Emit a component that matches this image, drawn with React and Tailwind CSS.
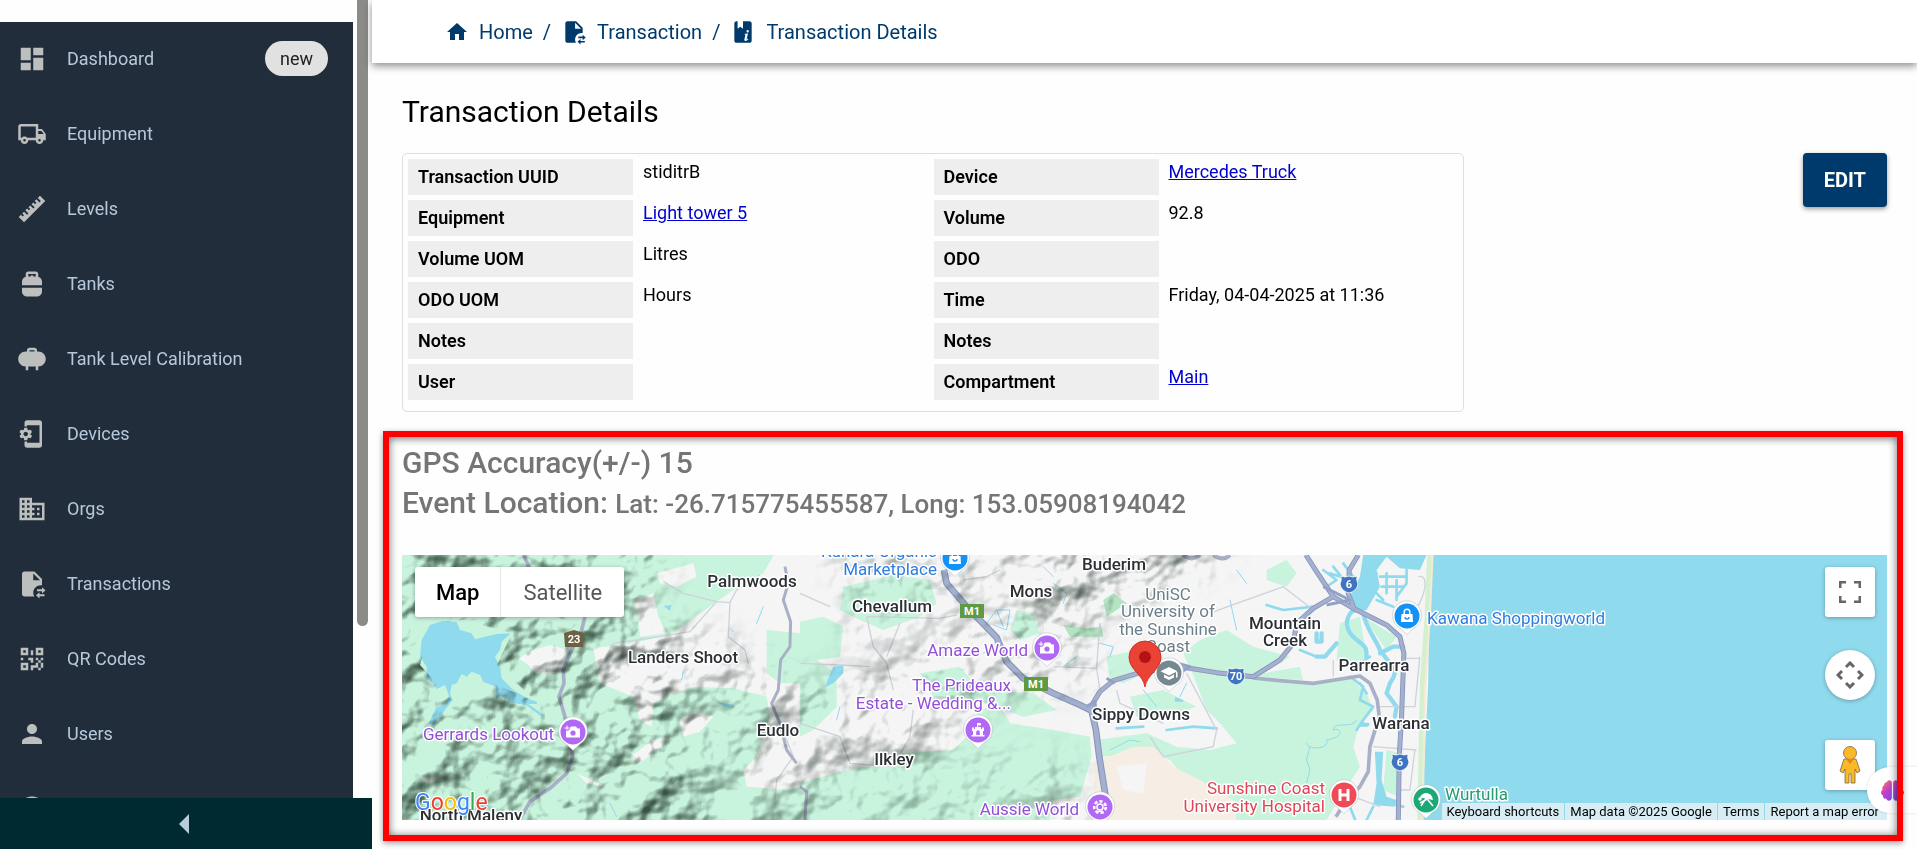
import React from 'react';
import {
  MdDashboard,
  MdOutlineLocalShipping,
  MdPropaneTank,
  MdPropane,
  MdPhonelinkSetup,
  MdDomain,
  MdPerson,
  MdAccountCircle,
  MdHome,
} from 'react-icons/md';
import { FaBrain } from 'react-icons/fa';

function PathIcon({ d, className }) {
  return (
    <svg viewBox="0 0 24 24" fill="currentColor" fillRule="evenodd" className={className} aria-hidden="true">
      <path d={d} />
    </svg>
  );
}

const RULER =
  'M1.39,18.36L3.16,16.6L4.58,18L5.64,16.95L4.22,15.54L5.64,14.12L8.11,16.6L9.17,15.54L6.7,13.06L8.11,11.65L9.53,13.06L10.59,12L9.17,10.59L10.59,9.17L13.06,11.65L14.12,10.59L11.65,8.11L13.06,6.7L14.47,8.11L15.54,7.05L14.12,5.64L15.54,4.22L18,6.7L19.07,5.64L16.6,3.16L18.36,1.39L22.61,5.64L5.64,22.61L1.39,18.36Z';
const QRCODE =
  'M3,11H5V13H3V11M11,5H13V9H11V5M9,11H13V15H11V13H9V11M15,11H17V13H19V11H21V13H19V15H21V19H19V21H17V19H13V21H11V17H15V15H17V13H15V11M19,19V15H17V19H19M15,3H21V9H15V3M17,5V7H19V5H17M3,3H9V9H3V3M5,5V7H7V5H5M3,15H9V21H3V15M5,17V19H7V17H5Z';
const FILE_SWAP =
  'M14,2H6C4.89,2 4,2.89 4,4V20C4,21.11 4.89,22 6,22H13.8C13.3,21.1 13,20.1 13,19C13,15.7 15.7,13 19,13C19.3,13 19.7,13 20,13.1V8L14,2M13,9V3.5L18.5,9H13M20,14.5V16.2H16V17.8H20V19.5L22.8,17L20,14.5M18,18.5L15.2,21L18,23.5V21.8H22V20.2H18V18.5Z';
const BOOK_INFO =
  'M6,2H7V9L9.5,7.2L12,9V2H18C19.1,2 20,2.9 20,4V20C20,21.1 19.1,22 18,22H6C4.9,22 4,21.1 4,20V4C4,2.9 4.9,2 6,2M16.3,10.2A1.1,1.1 0 1,0 16.3,12.4A1.1,1.1 0 1,0 16.3,10.2M13.6,13.6L13.4,14.4H14.3L13.3,18.6C13,20 14,20.4 15,20.1C15.9,19.8 16.5,19.2 17,18.4L16.4,18C15.9,18.7 15.2,19.2 15.3,18.6L16.6,13.3L13.6,13.6Z';

const RulerIcon = ({ className }) => <PathIcon d={RULER} className={className} />;
const QrIcon = ({ className }) => <PathIcon d={QRCODE} className={className} />;
const FileSwapIcon = ({ className }) => <PathIcon d={FILE_SWAP} className={className} />;
const BookIcon = ({ className }) => <PathIcon d={BOOK_INFO} className={className} />;

const NAV = [
  { label: 'Dashboard', icon: MdDashboard, badge: 'new' },
  { label: 'Equipment', icon: MdOutlineLocalShipping },
  { label: 'Levels', icon: RulerIcon },
  { label: 'Tanks', icon: MdPropaneTank },
  { label: 'Tank Level Calibration', icon: MdPropane },
  { label: 'Devices', icon: MdPhonelinkSetup },
  { label: 'Orgs', icon: MdDomain },
  { label: 'Transactions', icon: FileSwapIcon },
  { label: 'QR Codes', icon: QrIcon },
  { label: 'Users', icon: MdPerson },
  { label: '', icon: MdAccountCircle },
];

function Sidebar() {
  return (
    <aside className="flex w-[372px] shrink-0 flex-col">
      <div className="flex min-h-0 flex-1 gap-1 overflow-hidden">
        <nav className="mt-[22px] w-[353px] overflow-hidden bg-[#212d3b]">
          {NAV.map(({ label, icon: Icon, badge }) => (
            <a key={label} href="#" aria-label={label || 'Account'} className="flex h-[75px] items-center pb-0.5 pl-[17px] pr-[25px] text-[18px] text-[#b7c8da]">
              <Icon className="size-[30px] text-[#bdbfbe]" />
              <span className="ml-5 flex-1">{label}</span>
              {badge && (
                <span className="flex h-[35px] items-center rounded-full bg-[#e1e1e1] px-[15px] text-[#222]">{badge}</span>
              )}
            </a>
          ))}
        </nav>
        <div className="h-[626px] w-[11px] rounded-b-full bg-[#8b8b89]" />
      </div>
      <button type="button" aria-label="Collapse sidebar" className="flex h-[51px] items-center justify-center bg-[#002a31] pr-1">
        <svg viewBox="0 0 10 20" className="h-5 w-[10px]" fill="#b9cde0">
          <path d="M10 0V20L0 10Z" />
        </svg>
      </button>
    </aside>
  );
}

function Breadcrumbs() {
  return (
    <header className="z-10 flex h-[63px] shrink-0 items-center bg-white pl-[73px] text-[20px] text-[#003a6c] shadow-[0_3px_8px_rgba(0,0,0,0.45)]">
      <a href="#" className="flex items-center gap-[10px]">
        <MdHome className="size-6" />
        Home
      </a>
      <span className="mx-[10px]">/</span>
      <a href="#" className="flex items-center gap-[10px]">
        <FileSwapIcon className="size-[26px]" />
        Transaction
      </a>
      <span className="mx-[10px]">/</span>
      <a href="#" className="flex items-center gap-[10px]">
        <BookIcon className="size-[26px]" />
        Transaction Details
      </a>
    </header>
  );
}

const ROWS = [
  [['Transaction UUID', 'stiditrB'], ['Device', 'Mercedes Truck', true]],
  [['Equipment', 'Light tower 5', true], ['Volume', '92.8']],
  [['Volume UOM', 'Litres'], ['ODO', '']],
  [['ODO UOM', 'Hours'], ['Time', 'Friday, 04-04-2025 at 11:36']],
  [['Notes', ''], ['Notes', '']],
  [['User', ''], ['Compartment', 'Main', true]],
];

function DetailsTable() {
  return (
    <div className="max-w-[1062px] flex-1 rounded-[5px] border border-[#dedede] pr-1 pb-[6px]">
      <table className="w-full table-fixed border-separate border-spacing-[5px] text-[18px] leading-[26px] text-black">
        <tbody>
          {ROWS.map((row, i) => (
            <tr key={i}>
              {row.map(([label, value, link], col) => (
                <React.Fragment key={col}>
                  <th scope="row" className="h-9 w-[225px] bg-[#eeeeee] px-[10px] text-left align-middle font-semibold">
                    {label}
                  </th>
                  <td className="px-[5px] align-top">
                    {link ? <a href="#" className="text-[#0000d0] underline">{value}</a> : value}
                  </td>
                </React.Fragment>
              ))}
            </tr>
          ))}
        </tbody>
      </table>
    </div>
  );
}

const PLACES = [
  ['Palmwoods', 350, 32],
  ['Landers Shoot', 281, 108],
  ['Eudlo', 376, 181],
  ['North Maleny', 69, 266],
  ['Chevallum', 490, 57],
  ['Mons', 629, 42],
  ['Buderim', 712, 15],
  ['Ilkley', 492, 210],
  ['Sippy Downs', 739, 165],
  ['Mountain', 883, 74],
  ['Creek', 883, 91],
  ['Parrearra', 972, 116],
  ['Warana', 999, 174],
];

const POIS = [
  ['Gerrards Lookout', 152, 185, 'end', '#9250d8'],
  ['Kunara Organic', 535, 2, 'end', '#2f7de0'],
  ['Marketplace', 535, 20, 'end', '#2f7de0'],
  ['Amaze World', 626, 101, 'end', '#9250d8'],
  ['The Prideaux', 609, 136, 'end', '#9250d8'],
  ['Estate - Wedding &...', 609, 154, 'end', '#9250d8'],
  ['Aussie World', 677, 260, 'end', '#9250d8'],
  ['UniSC', 766, 45, 'middle', '#6b7f8a'],
  ['University of', 766, 62, 'middle', '#6b7f8a'],
  ['the Sunshine', 766, 80, 'middle', '#6b7f8a'],
  ['Coast', 766, 97, 'middle', '#6b7f8a'],
  ['Kawana Shoppingworld', 1025, 69, 'start', '#2f7de0'],
  ['Sunshine Coast', 923, 239, 'end', '#e04556'],
  ['University Hospital', 923, 257, 'end', '#e04556'],
  ['Wurtulla', 1043, 245, 'start', '#289a72'],
];

const GLYPHS = {
  camera: (
    <g>
      <path fill="#fff" d="M-7-3.5H-3.5L-2-5.5H3L4.5-3.5H7V5.5H-7Z" />
      <circle cy="1" r="2.6" fill="#b168f5" />
      <path stroke="#b168f5" strokeWidth="3" d="M-6-7V-1M-9-4H-3" />
      <path stroke="#fff" strokeWidth="1" d="M-6-6.500V-1.500M-8.500-4H-3.500" />
    </g>
  ),
  castle: (
    <g fill="#fff">
      <path fillRule="evenodd" d="M-6-2.500H-4V-1H-3V-3H3V-1H4V-2.500H6V1H5V5H6.500V6.500H-6.500V5H-5V1H-6ZM-1.800 5V2A1.800 1.800 0 0 1 1.800 2V5Z" />
      <path d="M-1-7H3V-4.500H0V-3H-1Z" />
    </g>
  ),
  bag: (
    <g>
      <path fill="#fff" d="M-5.500-2H5.500L6 6H-6Z" />
      <path fill="none" stroke="#fff" strokeWidth="1.500" d="M-2.800-1V-4A2.800 2.800 0 0 1 2.800-4V-1" />
      <path fill="none" stroke="#1a8cf5" strokeWidth="1.300" d="M-2 1A2 2 0 0 0 2 1" />
    </g>
  ),
  flower: (
    <g fill="none" stroke="#fff" strokeWidth="1.500">
      <circle r="3" />
      <circle r="5.800" strokeWidth="2.600" strokeDasharray="3.200 2" />
      <path d="M-3.500 6.500C-2 3 2 3 3.500 6.500" />
    </g>
  ),
  school: (
    <g fill="#fff">
      <path d="M0-6L8.500-1.700L0 2.600L-8.500-1.700Z" />
      <path d="M-5 1.500L0 4L5 1.500V4.500L0 7L-5 4.500ZM7-1H8.500V4.500H7Z" />
    </g>
  ),
  hospital: <path fill="none" stroke="#fff" strokeWidth="3" d="M-4-6V6M4-6V6M-4 0H4" />,
  beach: (
    <g fill="none" stroke="#fff" strokeWidth="1.500">
      <path fill="#fff" d="M-5-3C-2-8 5-7 6-1Z" />
      <path d="M1-3L-5 6M2 0L7 6M5-3L-6 3" />
      <circle cx="-6" cy="-1" r="1" />
    </g>
  ),
};

const PINS = [
  [171, 177, '#b168f5', 'camera'],
  [645, 93, '#b168f5', 'camera'],
  [576, 175, '#b168f5', 'castle'],
  [553, 3, '#1292f7', 'bag'],
  [1005, 61, '#1292f7', 'bag'],
  [698, 252, '#b168f5', 'flower'],
  [767, 118, '#75878f', 'school'],
  [942, 240, '#f04a57', 'hospital'],
  [1024, 245, '#1fa877', 'beach'],
];

const SHIELDS = [
  [172, 84, '23', '#6d6145'],
  [570, 56, 'M1', '#5f9a42'],
  [634, 129, 'M1', '#5f9a42'],
  [834, 121, '70', '#3f74c0'],
  [947, 29, '6', '#3f74c0'],
  [998, 207, '6', '#3f74c0'],
];

function Shield({ x, y, text, color }) {
  let shape = <rect x="-12" y="-7" width="24" height="14" fill={color} />;
  if (text === '23') shape = <path d="M-10-6L0-9L10-6L9 8H-9Z" fill={color} />;
  if (color === '#3f74c0') shape = <path d="M-8-8Q-4-6 0-8Q4-6 8-8Q7-4 9 0Q8 7 0 9Q-8 7-9 0Q-7-4-8-8Z" fill={color} stroke="#fff" strokeWidth="0.800" />;
  return (
    <g transform={`translate(${x} ${y})`}>
      {shape}
      <text y="4" textAnchor="middle" fill="#fff" className="text-[11px] font-bold">{text}</text>
    </g>
  );
}

const MOTORWAY = 'M1632 60L1640 100L1700 170L1790 262L1820 335L1870 385L1960 430L2040 465L2075 482L2088 540L2098 620L2118 745';
const HIGHWAYS =
  'M2070 475L2100 425L2140 392L2230 365L2350 352L2450 368L2560 380L2640 330L2680 280L2690 220L2740 175L2800 140L2860 175L2960 225L3000 260L3012 310L3005 500L2998 620L2995 820M2718 15L2750 65L2800 140M2875 15L2848 60L2845 130L2862 175';

// Land, water and roads are drawn on a grid three times finer than the labels
function Terrain() {
  return (
    <g transform="translate(-2 -5) scale(0.3333)">
      <rect width="4500" height="850" fill="#f5f5f6" />
      <g fill="#c8f3dd">
        <path d="M0 0H1130L1090 70L1000 120L950 155L880 205L820 250L700 280L580 295L600 400L700 440L720 510L755 530L760 460L800 440L880 410L1000 415L1100 440L1110 500L1070 620L1030 660L1040 710L1160 720L1240 700V830H0Z" />
        <path d="M1100 240L1200 250L1230 340L1200 400L1140 400L1100 370Z" />
        <path d="M1330 110L1480 75L1590 90L1610 160L1560 200L1450 240L1380 210L1320 180Z" />
        <path d="M1200 215L1270 200L1330 230L1320 320L1250 330L1310 370L1310 470L1240 540L1200 560Z" />
        <path d="M1200 700L1300 670L1390 650L1480 650L1500 610L1660 600L1700 560L1720 500L1790 450L1830 520L1960 540L2070 560L2075 620L2040 740L1960 750L1950 810H1200Z" />
        <path d="M1560 370L1680 350L1740 420L1900 430L1970 480L1870 500L1760 460L1600 440Z" />
        <path d="M1850 180L1900 190L1920 250L1860 270L1830 240ZM2120 320L2260 290L2300 340L2170 400L2130 390ZM2190 440L2290 420L2390 470L2300 500L2210 500Z" />
        <path d="M2600 60L2660 30L2690 70L2660 110L2600 90ZM2350 310L2400 270L2480 240L2560 290L2670 320L2590 370L2700 350L2710 390L2560 380L2370 355Z" />
        <path d="M2370 350L2480 372L2560 382L2740 400L2850 385L2900 430L2920 480L2880 520L2860 590L2880 650L2810 760L2780 810H2500L2450 740L2360 690L2310 630L2250 610L2100 620L2090 570L2240 550L2330 590L2430 600L2510 580L2460 520L2420 480Z" />
        <path d="M2820 220L2880 200L2900 320L2850 360L2810 330ZM2960 600L3000 610L2995 740L2950 720ZM2890 200L2990 260L2960 300Z" />
        <path d="M2110 150L2140 130L2180 160L2120 200ZM1990 225L2060 235L2105 230L2110 260L2010 260Z" fill="#b5e4c5" />
      </g>
      <path d="M2080 640L2200 590L2260 590L2320 650L2400 690L2500 750L2510 810H2085Z" fill="#f6eee5" />
      <g fill="#f5f5f6">
        <path d="M355 325L400 300L450 285L505 300L480 370L410 372L385 345Z" />
        <path d="M700 150L760 130L775 200L800 250L720 260L715 200ZM560 100L620 80L640 190L580 180ZM770 70L880 40L890 80L830 110L780 100Z" />
        <path d="M840 510L880 485L940 500L900 545L850 560ZM690 620L760 570L820 560L770 600L720 640ZM60 680L150 685L80 700ZM530 670L620 710L560 700Z" />
        <path d="M2150 650L2240 640L2230 730L2170 720ZM2550 250L2640 240L2680 300L2600 300Z" />
      </g>
      <path d="M2360 560L2440 510L2450 590L2330 590L2280 560Z" fill="#f5f5f6" />

      <g fill="#90daee">
        <path d="M90 225L130 212L170 216L180 240L215 250L225 268L290 252L332 250L305 275L300 300L285 320L300 350L305 385L340 420L380 445L412 455L410 462L385 462L432 495L425 500L378 465L335 458L300 435L290 450L288 410L250 395L240 375L215 365L200 380L185 372L170 400L155 405L150 430L158 450L100 525L85 522L110 470L135 465L148 440L135 405L110 417L100 400L80 385L80 350L60 320L65 270Z" />
        <path d="M1300 350L1330 345L1330 370L1300 400L1275 412L1285 385ZM950 455L1005 465L1000 475L970 468ZM790 168L815 165L810 182ZM2325 440L2350 450L2350 455L2325 455ZM2880 515L2910 520L2905 530L2880 530Z" />
        <path d="M3090 15H4500V820H3065L3085 400Z" />
        <path d="M2890 15H3080L3060 60L3000 55L2960 20L2930 60L2940 110L2900 180L2860 190L2850 140L2880 80Z" />
        <path d="M2925 605L2950 605L2945 690L2960 740L2990 750L2985 770L2920 765L2930 700Z" />
      </g>
      <path d="M3090 15L3082 200L3068 400L3060 820" fill="none" stroke="#d4f0cf" strokeWidth="16" />
      <path d="M3098 15L3090 200L3075 420L3068 820" fill="none" stroke="#f4ecd2" strokeWidth="6" />

      <g fill="none" stroke="#90daee" strokeLinecap="round" strokeLinejoin="round">
        <g strokeWidth="13">
          <path d="M2860 180C2830 210 2840 240 2860 260C2890 290 2900 280 2900 320" />
          <path d="M2890 190C2900 240 2930 270 2940 300L2970 340C2990 360 2990 370 2970 400L2960 430L2990 470L2985 500" />
          <path d="M2940 310L2980 290H3010M2750 320H2775L2810 280M2750 250V275H2765V250" />
        </g>
        <g strokeWidth="8">
          <path d="M2790 70L2850 90M2800 50L2840 100M2830 40L2860 80M2770 60L2810 90L2780 110M2930 70L2920 120L2950 150M2940 80H3020M2945 110H3010M2960 70V130M2990 90V150M2930 150L2980 170M3020 60V100L2990 140" />
          <path d="M2850 380L2890 410L2880 450L2920 470L2890 510L2870 540M2880 400L2900 430M2820 350L2880 340L2910 320M2850 770L2870 820M2900 810L2920 770M2990 765L3010 770" />
          <path d="M2450 535L2380 530L2300 540M2230 530L2150 535M2600 165L2650 180L2740 170M2700 300L2750 320" />
        </g>
        <g strokeWidth="3">
          <path d="M2720 580C2720 600 2790 600 2780 570C2840 560 2820 530 2800 540C2800 510 2860 540 2870 510M2730 590L2720 630L2730 660L2720 700" />
          <path d="M1760 220L1790 180L1830 180L1820 240L1780 225M1790 180L1810 230M1780 290L1750 310M1960 100L2000 130L1990 160M1930 50L1960 80M2490 150L2510 240M2510 60L2540 100M2100 280L2140 290L2130 320M1990 350L2030 320M2230 420L2270 470M2360 400L2340 440" />
          <path d="M2130 600L2190 570L2220 575M1320 470L1310 510M845 390L850 365M1070 220L1090 170M630 760L650 800M990 235L1000 245" />
        </g>
      </g>

      <g fill="none" stroke="#cfd2dc" strokeWidth="4">
        <path d="M790 95L850 130L950 155L990 158L1010 120L1080 75M990 158L985 260L1035 300L1045 340M950 155L870 245L780 260L640 280" />
        <path d="M1200 340L1320 345L1410 350M1400 200L1420 290L1460 340L1480 420M1500 220L1460 320M1200 520L1320 560L1350 640L1480 650L1530 560L1540 480M1400 200L1620 205L1670 195M1200 130L1290 170" />
        <path d="M1690 90L1760 80L1800 60M1960 350L2090 355L2100 420M2100 220L2090 355M2150 420L2160 460L2290 520M2250 560L2290 620L2440 590L2450 540L2360 370M2370 360L2340 350M2400 200L2650 110L2740 180" />
        <path d="M3055 80C3100 70 3060 180 3040 180M3020 325H3060M3060 320L3045 470L2940 470M2920 590L3050 600M3045 600L3030 720H3000M2860 740L2940 770M2800 380V330" />
        <path d="M1130 520L1160 570L1180 620L1130 690L1125 750" />
      </g>

      <g fill="none" stroke="#a8b0c6" strokeLinejoin="round">
        <path d="M370 15L392 60M560 180L545 240L510 310L490 360L492 400L477 440L492 490L510 560L518 620L500 670L450 715L390 755L370 790" strokeWidth="11" />
        <path d="M1155 50L1165 100L1150 150L1172 215L1170 290L1142 330L1135 420L1115 460L1140 520L1160 600L1190 640M1200 710L1220 725L1215 810" strokeWidth="9" />
        <path d="M2560 384L2640 392L2740 400L2880 378L2910 400L2932 450L2938 500L2910 590L2905 665L2880 710L2840 750L2808 800" strokeWidth="11" />
        <path d="M2350 15Q2375 35 2400 15M2440 15Q2470 35 2490 15" strokeWidth="12" />
      </g>
      <g fill="none" strokeLinejoin="round">
        <path d={MOTORWAY} stroke="#8794b8" strokeWidth="20" />
        <path d={HIGHWAYS} stroke="#8794b8" strokeWidth="15" />
        <path d={MOTORWAY} stroke="#a3b0d0" strokeWidth="14" />
        <path d={HIGHWAYS} stroke="#a3b0d0" strokeWidth="10" />
        <path d="M2770 110L2850 150L2780 165M2060 470L2085 455L2090 500M2335 340L2370 350L2345 365M2120 385L2145 400" stroke="#94a1c6" strokeWidth="9" />
      </g>
    </g>
  );
}

function Relief() {
  return (
    <g className="mix-blend-multiply">
      <defs>
        <filter id="relief" x="0" y="0" width="100%" height="100%" colorInterpolationFilters="sRGB">
          <feTurbulence type="fractalNoise" baseFrequency="0.018 0.02" numOctaves="4" seed="11" />
          <feColorMatrix values="0 0 0 0 0  0 0 0 0 0  0 0 0 0 0  1 0 0 0 0" />
          <feGaussianBlur stdDeviation="0.800" />
          <feDiffuseLighting surfaceScale="20" diffuseConstant="1.250" lightingColor="#fff">
            <feDistantLight azimuth="225" elevation="53" />
          </feDiffuseLighting>
          <feComponentTransfer>
            <feFuncR type="linear" slope="0.720" intercept="0.280" />
            <feFuncG type="linear" slope="0.660" intercept="0.340" />
            <feFuncB type="linear" slope="0.700" intercept="0.300" />
          </feComponentTransfer>
        </filter>
        <filter id="soften" x="-20%" y="-20%" width="140%" height="140%">
          <feGaussianBlur stdDeviation="16" />
        </filter>
        <mask id="hills">
          <rect width="1485" height="265" fill="#000" />
          <g filter="url(#soften)">
            <path fill="#fff" d="M-60-60H290L240 60L330 100L400 160V330H-60Z" />
            <path fill="#999" d="M270 60L420 130L560 70L680 40L700 120L560 160L480 280H300Z" />
            <path fill="#ddd" d="M640-40H840L800 20L700 60L620 90Z" />
            <path fill="#777" d="M420-40H640L620 40L450 90ZM440 200H680V300H440Z" />
          </g>
          <path d="M28 70L60 65L110 78L95 110L135 147L95 130L50 145L18 110Z" fill="#000" />
        </mask>
      </defs>
      <g mask="url(#hills)">
        <rect x="-20" y="-20" width="880" height="305" filter="url(#relief)" />
      </g>
    </g>
  );
}

function MapCanvas() {
  return (
    <svg viewBox="0 0 1485 265" preserveAspectRatio="xMidYMid slice" className="absolute inset-0 size-full" role="img" aria-label="Event location map">
      <Terrain />
      <Relief />
      {SHIELDS.map(([x, y, text, color]) => (
        <Shield key={`${x}-${y}`} x={x} y={y} text={text} color={color} />
      ))}
      <g className="text-[17px]" stroke="#fff" strokeWidth="3" strokeLinejoin="round" style={{ paintOrder: 'stroke' }}>
        {POIS.map(([text, x, y, anchor, color]) => (
          <text key={text} x={x} y={y} textAnchor={anchor} fill={color}>{text}</text>
        ))}
        {PLACES.map(([text, x, y]) => (
          <text key={text} x={x} y={y} textAnchor="middle" fill="#2c2f33" className="font-medium">{text}</text>
        ))}
      </g>
      {PINS.map(([x, y, color, glyph]) => (
        <g key={`${x}-${y}`} transform={`translate(${x} ${y})`}>
          <path d="M0 18.500L-7 12A14.500 14.500 0 1 1 7 12Z" fill="#fff" stroke="#9aa" strokeOpacity="0.400" />
          <circle r="12.500" fill={color} />
          {GLYPHS[glyph]}
        </g>
      ))}
      <path d="M743 132C741 119 727 115 727 102A16 16 0 0 1 759 102C759 115 745 119 743 132Z" fill="#ea4335" stroke="#c5221f" strokeWidth="0.800" />
      <circle cx="743" cy="102" r="6" fill="#b31412" />
      <text x="13" y="255" className="text-[23px]" stroke="#fff" strokeWidth="2" style={{ paintOrder: 'stroke' }}>
        <tspan fill="#4285f4">G</tspan>
        <tspan fill="#ea4335">o</tspan>
        <tspan fill="#fbbc04">o</tspan>
        <tspan fill="#4285f4">g</tspan>
        <tspan fill="#34a853">l</tspan>
        <tspan fill="#ea4335">e</tspan>
      </text>
    </svg>
  );
}

function MapControls() {
  const control = 'flex size-[50px] items-center justify-center bg-white shadow-[0_1px_4px_rgba(0,0,0,0.3)]';
  return (
    <>
      <div className="absolute left-[13px] top-3 flex h-[50px] rounded-[3px] bg-white text-[22px] shadow-[0_1px_4px_rgba(0,0,0,0.3)]">
        <button type="button" className="border-r border-[#e6e6e6] px-[21px] font-medium text-black">Map</button>
        <button type="button" className="px-[22px] text-[#565656]">Satellite</button>
      </div>
      <div className="absolute right-3 top-3 flex flex-col items-center">
        <button type="button" aria-label="Toggle fullscreen view" className={`${control} rounded-[3px]`}>
          <svg viewBox="0 0 22 22" className="size-[22px]" fill="none" stroke="#666" strokeWidth="2.500">
            <path d="M1.250 7V1.250H7M15 1.250H20.750V7M20.750 15V20.750H15M7 20.750H1.250V15" />
          </svg>
        </button>
        <button type="button" aria-label="Map camera controls" className={`${control} mt-[33px] rounded-full`}>
          <svg viewBox="0 0 28 28" className="size-7" fill="none" stroke="#666" strokeWidth="3">
            <path d="M10 6L14 2L18 6M10 22L14 26L18 22M6 10L2 14L6 18M22 10L26 14L22 18" />
          </svg>
        </button>
        <button type="button" aria-label="Drag Pegman onto the map" className={`${control} mt-10 rounded-[3px]`}>
          <svg viewBox="0 0 22 40" className="h-10 w-[22px]" stroke="#7a6a45" strokeWidth="0.800" fill="#fbb828">
            <path d="M5 14H17L21 26L18 28L16 24V38H12V29H10V38H6V24L4 28L1 26Z" />
            <circle cx="11" cy="8" r="6.500" />
            <path d="M7 14L11 19L15 14Z" fill="#e58a17" stroke="none" />
          </svg>
        </button>
      </div>
      <div className="absolute bottom-0 right-0 flex h-[17px] gap-px text-[13px] leading-[17px] text-black">
        <button type="button" className="bg-[#f5f5f5]/70 px-[5px]">Keyboard shortcuts</button>
        <span className="bg-[#f5f5f5]/70 px-[5px]">Map data ©2025 Google</span>
        <a href="#" className="bg-[#f5f5f5]/70 px-[5px]">Terms</a>
        <a href="#" className="bg-[#f5f5f5]/70 pl-[5px] pr-2">Report a map error</a>
      </div>
    </>
  );
}

function LocationSection() {
  return (
    <section className="relative mt-[19px] mb-2 flex min-h-0 flex-1 flex-col pt-3 pb-[21px]">
      <h2 className="text-[30px] leading-10 font-medium text-[#757575]">GPS Accuracy(+/-) 15</h2>
      <h2 className="text-[30px] leading-10 font-medium text-[#757575]">
        Event Location: <span className="text-[26px]">Lat: -26.715775455587, Long: 153.05908194042</span>
      </h2>
      <div className="relative mt-[31px] min-h-0 flex-1 overflow-hidden">
        <MapCanvas />
        <MapControls />
      </div>
      <div className="pointer-events-none absolute inset-y-0 -left-[19px] -right-[16px] z-20 border-6 border-[#fe0000] shadow-[0_2px_6px_rgba(0,0,0,0.4),inset_0_1px_8px_rgba(0,0,0,0.6)]" />
    </section>
  );
}

export default function App() {
  return (
    <div className="flex h-screen overflow-hidden bg-[#fefefe] font-['Roboto',sans-serif]">
      <Sidebar />
      <div className="relative flex min-w-0 flex-1 flex-col">
        <Breadcrumbs />
        <main className="flex min-h-0 flex-1 flex-col px-[30px] pt-[31px]">
          <h1 className="mb-[23px] text-[30px] leading-9 text-black">Transaction Details</h1>
          <div className="flex items-start justify-between">
            <DetailsTable />
            <button type="button" className="h-[54px] rounded-[4px] bg-[#003a6c] px-[21px] text-[20px] font-bold text-white shadow-[0_2px_5px_rgba(0,0,0,0.4)]">
              EDIT
            </button>
          </div>
          <LocationSection />
        </main>
        <button type="button" aria-label="Open assistant" className="absolute right-0 bottom-9 z-10 flex h-[46px] w-[50px] items-center rounded-l-full bg-white pl-[14px] shadow-[0_0_3px_rgba(0,0,0,0.15)]">
          <svg className="size-0" aria-hidden="true">
            <linearGradient id="brain" x1="0" y1="0" x2="1" y2="1">
              <stop offset="0" stopColor="#ff7a3d" />
              <stop offset="0.400" stopColor="#c23fd0" />
              <stop offset="1" stopColor="#4a5cf0" />
            </linearGradient>
          </svg>
          <FaBrain className="size-[23px] fill-[url(#brain)]" />
        </button>
      </div>
    </div>
  );
}
